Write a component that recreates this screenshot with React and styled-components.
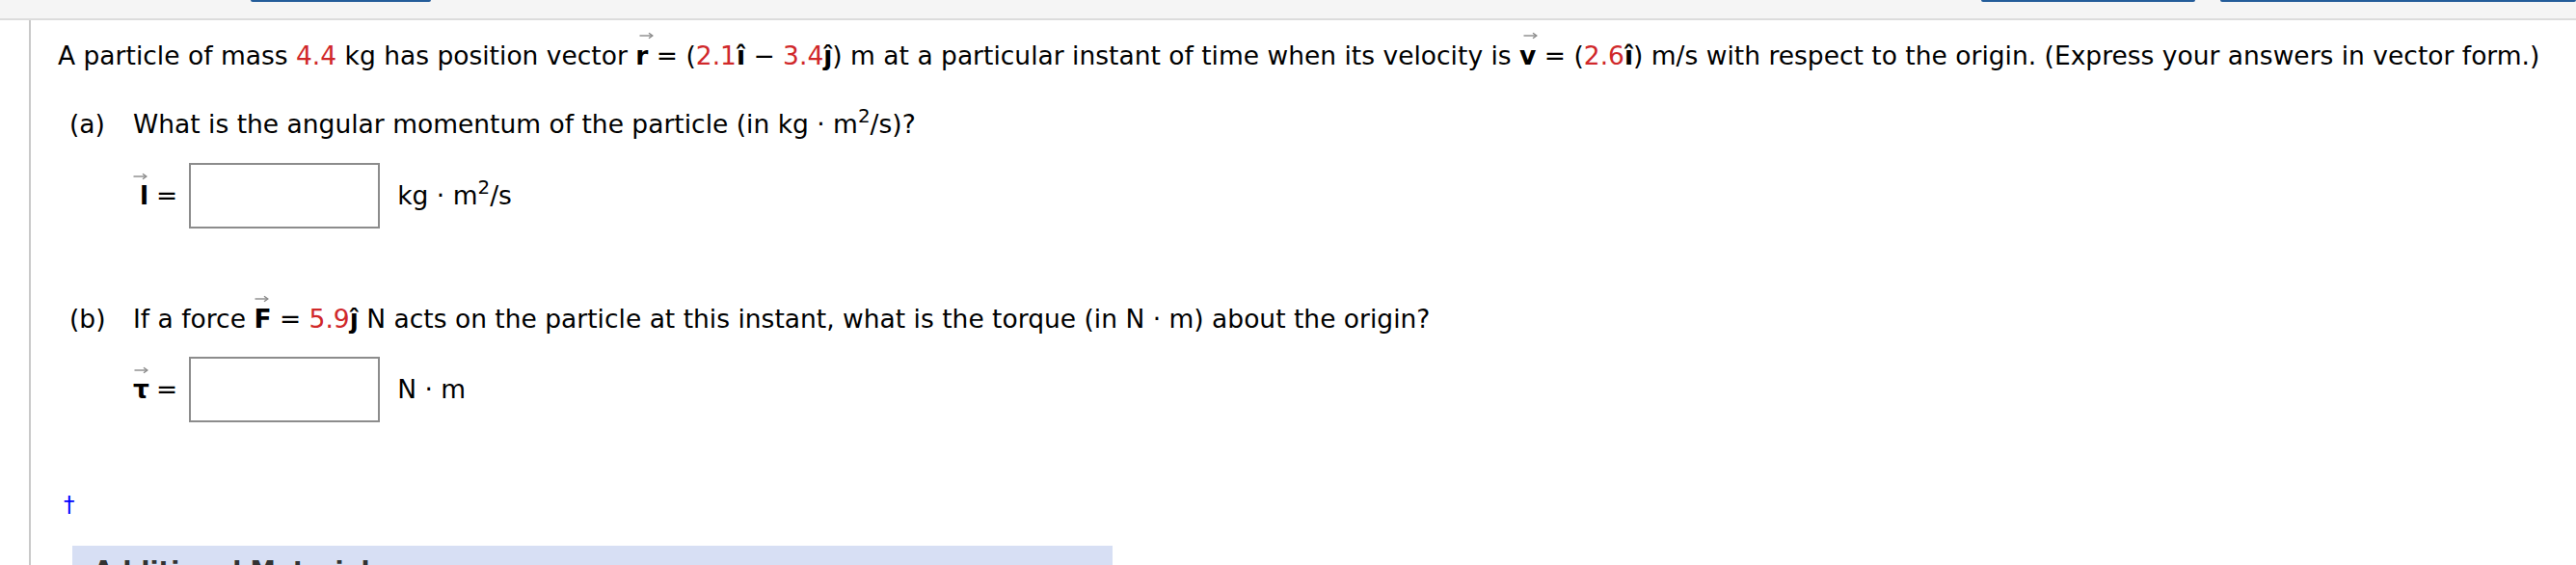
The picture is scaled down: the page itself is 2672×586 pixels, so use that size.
import React from 'react'
import styled, { createGlobalStyle } from 'styled-components'


const GlobalStyle = createGlobalStyle`
    html, body {
        margin: 0;
        padding: 0;
        background: #ffffff;
    }
    body {
        font-family: "DejaVu Sans", Verdana, sans-serif;
        font-size: 26.5px;
        color: #000000;
        overflow: hidden;
    }
`

const TopBar = styled.div`
    height: 19px;
    background-color: #f5f5f5;
    border-bottom: 2px solid #dcdcdc;
    display: flex;
    align-items: flex-start;
`

// bottom edges of the toolbar buttons scrolled out of view
const TabEdge = styled.div`
    height: 2px;
    width: ${p => p.$w}px;
    margin-left: ${p => p.$ml}px;
    background-color: #245d9a;
    border-radius: 0 0 3px 3px;
`

const Page = styled.div`
    margin-left: 30px;
    border-left: 2px solid #c9c9c9;
    padding: 22px 0 0 28px;
`

const Intro = styled.p`
    margin: 0;
    line-height: 30px;
    white-space: nowrap;
`

const Red = styled.span`
    color: #d0282a;
`

const Bold = styled.span`
    font-weight: bold;
`

const Vec = styled.span`
    position: relative;
    font-weight: bold;
`

const ArrowSvg = styled.svg`
    position: absolute;
    top: -9px;
    left: ${p => p.$dx || 0}px;
`

const Sup = styled.sup`
    font-size: 0.75em;
    line-height: 0;
    vertical-align: 0.55em;
`

const PartList = styled.div`
    margin-top: 41px;
    padding-left: 12px;
`

const Part = styled.div`
    margin-top: ${p => p.$mt || 0}px;
`

const QuestionLine = styled.div`
    display: flex;
    line-height: 30px;
    white-space: nowrap;
`

const PartLabel = styled.span`
    width: 66px;
    flex: none;
`

const AnswerRow = styled.div`
    display: flex;
    align-items: center;
    margin-left: 66px;
    margin-top: ${p => p.$mt}px;
    line-height: 30px;
    white-space: nowrap;
`

const Symbol = styled.span`
    position: relative;
    display: inline-block;
    width: 16px;
    text-align: right;
    font-weight: bold;
`

const Eq = styled.span`
    margin: 0 12px 0 8px;
`

const AnswerBox = styled.div`
    box-sizing: border-box;
    width: 198px;
    height: 68px;
    border: 2px solid #8c8c8c;
    background-color: #ffffff;
`

const Units = styled.span`
    margin-left: 18px;
`

const Footnote = styled.div`
    margin: 70px 0 0 6px;
    font-size: 23px;
    line-height: 30px;
    color: #0000ff;
`

const Materials = styled.div`
    margin: 28px 0 0 15px;
    width: 1079px;
    height: 120px;
    box-sizing: border-box;
    padding: 11px 22px;
    background-color: #d7dff4;
    font-weight: bold;
    line-height: 30px;
    color: #333333;
`

const Arrow = ({ dx }) => (
    <ArrowSvg $dx={dx} width="15" height="8" viewBox="0 0 15 8">
        <path d="M0.5 4H13.5" stroke="#8a8a8a" strokeWidth="1.4" fill="none" />
        <path d="M10 1.2L13.8 4L10 6.8" stroke="#8a8a8a" strokeWidth="1.4" fill="none" />
    </ArrowSvg>
)

export default function App() {
    return (
        <>
            <GlobalStyle />
            <TopBar>
                <TabEdge $ml={260} $w={187} />
                <TabEdge $ml={1608} $w={222} />
                <TabEdge $ml={26} $w={369} />
            </TopBar>
            <Page>
                <Intro>
                    A particle of mass <Red>4.4</Red> kg has position vector{' '}
                    <Vec>r<Arrow dx={4} /></Vec> = (<Red>2.1</Red><Bold>î</Bold> − <Red>3.4</Red><Bold>ĵ</Bold>) m
                    at a particular instant of time when its velocity is{' '}
                    <Vec>v<Arrow dx={4} /></Vec> = (<Red>2.6</Red><Bold>î</Bold>) m/s with respect to the origin.
                    (Express your answers in vector form.)
                </Intro>

                <PartList>
                    <Part>
                        <QuestionLine>
                            <PartLabel>(a)</PartLabel>
                            <span>
                                What is the angular momentum of the particle (in kg · m<Sup>2</Sup>/s)?
                            </span>
                        </QuestionLine>
                        <AnswerRow $mt={25}>
                            <Symbol>l<Arrow dx={0} /></Symbol>
                            <Eq>=</Eq>
                            <AnswerBox />
                            <Units>kg · m<Sup>2</Sup>/s</Units>
                        </AnswerRow>
                    </Part>

                    <Part $mt={79}>
                        <QuestionLine>
                            <PartLabel>(b)</PartLabel>
                            <span>
                                If a force <Vec>F<Arrow dx={1} /></Vec> = <Red>5.9</Red><Bold>ĵ</Bold> N acts on the
                                particle at this instant, what is the torque (in N · m) about the origin?
                            </span>
                        </QuestionLine>
                        <AnswerRow $mt={24}>
                            <Symbol>τ<Arrow dx={1} /></Symbol>
                            <Eq>=</Eq>
                            <AnswerBox />
                            <Units>N · m</Units>
                        </AnswerRow>
                    </Part>
                </PartList>

                <Footnote>†</Footnote>

                <Materials>Additional Materials</Materials>
            </Page>
        </>
    )
}
